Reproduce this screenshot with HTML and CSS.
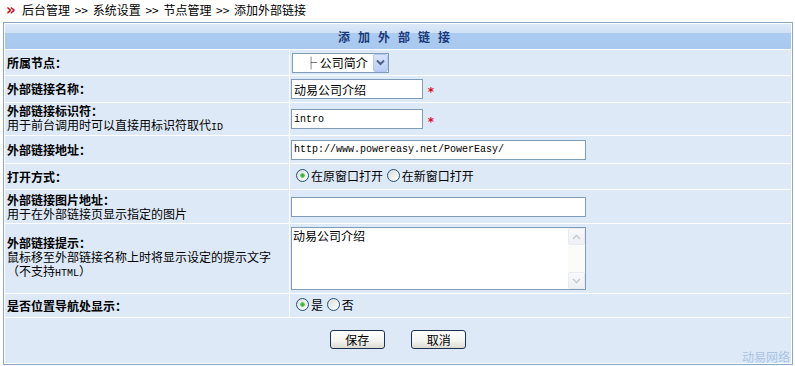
FILE: index.html
```html
<!DOCTYPE html>
<html lang="zh-CN">
<head>
    <meta charset="UTF-8">
    <title>添加外部链接</title>
    <link rel="stylesheet" href="styles.css">
</head>
<body>
    <div class="crumbs">
        <span class="crumb-arrow">&raquo;</span>
        <span class="crumb-text">后台管理 &gt;&gt; 系统设置 &gt;&gt; 节点管理 &gt;&gt; 添加外部链接</span>
    </div>

    <table class="form-table" cellspacing="1" cellpadding="0">
        <tr>
            <th colspan="2" class="title">添加外部链接</th>
        </tr>
        <tr class="row-node">
            <td class="label"><b>所属节点：</b></td>
            <td class="value">
                <span class="select-box">
                    <select class="node-select">
                        <option>├ 公司简介</option>
                    </select>
                    <span class="select-arrow">
                        <svg width="9" height="7" viewBox="0 0 9 7"><path d="M1 1.5 L4.5 5 L8 1.5" fill="none" stroke="#4d6185" stroke-width="2"/></svg>
                    </span>
                </span>
            </td>
        </tr>
        <tr class="row-name">
            <td class="label"><b>外部链接名称：</b></td>
            <td class="value"><input type="text" class="text short" value="动易公司介绍"> <span class="required">*</span></td>
        </tr>
        <tr class="row-ident">
            <td class="label"><b>外部链接标识符：</b><br>用于前台调用时可以直接用标识符取代<span class="mono">ID</span></td>
            <td class="value"><input type="text" class="text short mono" value="intro"> <span class="required">*</span></td>
        </tr>
        <tr class="row-url">
            <td class="label"><b>外部链接地址：</b></td>
            <td class="value"><input type="text" class="text long mono" value="http://www.powereasy.net/PowerEasy/"></td>
        </tr>
        <tr class="row-open">
            <td class="label"><b>打开方式：</b></td>
            <td class="value">
                <label class="choice"><input type="radio" name="open" checked>在原窗口打开</label>
                <label class="choice"><input type="radio" name="open">在新窗口打开</label>
            </td>
        </tr>
        <tr class="row-pic">
            <td class="label"><b>外部链接图片地址：</b><br>用于在外部链接页显示指定的图片</td>
            <td class="value"><input type="text" class="text long" value=""></td>
        </tr>
        <tr class="row-tip">
            <td class="label"><b>外部链接提示：</b><br>鼠标移至外部链接名称上时将显示设定的提示文字<br>（不支持<span class="mono">HTML</span>）</td>
            <td class="value">
                <div class="memo">
                    <textarea class="memo-text">动易公司介绍</textarea>
                    <div class="memo-scroll">
                        <span class="scroll-btn">
                            <svg width="9" height="6" viewBox="0 0 9 6"><path d="M1 5 L4.5 1.5 L8 5" fill="none" stroke="#c9ccd3" stroke-width="1.6"/></svg>
                        </span>
                        <span class="scroll-btn">
                            <svg width="9" height="6" viewBox="0 0 9 6"><path d="M1 1 L4.5 4.5 L8 1" fill="none" stroke="#c9ccd3" stroke-width="1.6"/></svg>
                        </span>
                    </div>
                </div>
            </td>
        </tr>
        <tr class="row-nav">
            <td class="label"><b>是否位置导航处显示：</b></td>
            <td class="value">
                <label class="choice"><input type="radio" name="nav" checked>是</label>
                <label class="choice"><input type="radio" name="nav">否</label>
            </td>
        </tr>
        <tr class="row-buttons">
            <td colspan="2" class="buttons">
                <button type="button" class="btn">保存</button>
                <button type="button" class="btn">取消</button>
            </td>
        </tr>
    </table>

    <div class="brand">动易网络</div>
</body>
</html>
```

FILE: styles.css
```css
body {
    margin: 0;
    padding: 0;
    background: #ffffff;
    font-family: "Noto Sans CJK SC", "DejaVu Sans", sans-serif;
    font-size: 12px;
    line-height: 14px;
    color: #000;
    position: relative;
    height: 366px;
    overflow: hidden;
}

/* breadcrumb */
.crumbs {
    height: 22px;
    display: flex;
    align-items: center;
    padding-left: 6px;
    box-sizing: border-box;
    padding-bottom: 2px;
}
.crumb-arrow {
    color: #c8101a;
    font-weight: bold;
    font-size: 15px;
    line-height: 14px;
    font-family: "DejaVu Sans", sans-serif;
    width: 16px;
}
.crumb-text {
    color: #000;
    white-space: pre;
    word-spacing: 2px;
}

/* form table */
.form-table {
    margin-left: 3px;
    width: 790px;
    border: 1px solid #8ea6c6;
    background: #ffffff;
    border-spacing: 1px;
}
.title {
    height: 25px;
    padding: 0;
    background: linear-gradient(#dce9f8 0, #cfe1f5 9px, #abcbf0 9px, #a8c8ee 100%);
    color: #193a7c;
    font-weight: bold;
    font-size: 12px;
    letter-spacing: 8px;
    text-align: center;
    vertical-align: middle;
}
.form-table td {
    background: #dde9f7;
    vertical-align: middle;
}
.label {
    width: 282px;
    padding: 0 0 0 2px;
}
.value {
    padding: 0 0 0 1px;
}
.row-node td { height: 25px; }
.row-name td { height: 26px; }
.row-ident td { height: 32px; }
.row-url td { height: 27px; }
.row-open td { height: 25px; }
.row-pic td { height: 33px; }
.row-tip td { height: 69px; }
.row-nav td { height: 23px; }
.row-buttons td { height: 45px; }

.mono {
    font-family: "Liberation Mono", "DejaVu Sans Mono", monospace;
    font-size: 10px;
}

/* inputs */
.text {
    height: 20px;
    box-sizing: border-box;
    border: 1px solid #7f9db9;
    background: #fff;
    padding: 0 2px;
    margin: 0;
    font-family: "Noto Sans CJK SC", "DejaVu Sans", sans-serif;
    font-size: 12px;
    color: #000;
    vertical-align: middle;
    outline: none;
}
.text.mono {
    font-family: "Liberation Mono", "DejaVu Sans Mono", monospace;
    font-size: 10px;
}
.short {
    width: 132px;
}
.long {
    width: 295px;
}
.required {
    color: #e0101a;
    font-weight: bold;
    font-family: "DejaVu Sans", sans-serif;
    font-size: 12px;
    margin-left: 2px;
    position: relative;
    top: 4px;
}

/* select */
.select-box {
    position: relative;
    display: inline-block;
    margin-left: 1px;
    width: 97px;
    height: 20px;
    vertical-align: middle;
}
.node-select {
    appearance: none;
    -webkit-appearance: none;
    width: 97px;
    height: 20px;
    box-sizing: border-box;
    border: 1px solid #7f9db9;
    background: #fff;
    padding: 0 0 0 12px;
    margin: 0;
    font-family: "Noto Sans CJK SC", "DejaVu Sans", sans-serif;
    font-size: 12px;
    color: #000;
    outline: none;
}
.select-arrow {
    position: absolute;
    right: 1px;
    top: 1px;
    width: 15px;
    height: 18px;
    box-sizing: border-box;
    border: 1px solid #b5c8f2;
    border-radius: 2px;
    background: linear-gradient(#d9e4fb, #b9cdf6);
    display: flex;
    align-items: center;
    justify-content: center;
}

/* radios */
.choice {
    display: inline-flex;
    align-items: center;
    margin-right: 1px;
}
.choice input {
    appearance: none;
    -webkit-appearance: none;
    width: 13px;
    height: 13px;
    margin: 0 2px 0 0;
    border: 1px solid #1d5281;
    border-radius: 50%;
    background: linear-gradient(135deg, #dcdcd6, #ffffff);
    box-sizing: border-box;
}
.choice input:checked {
    background: radial-gradient(circle, #2fa52f 0, #5fc75f 2px, rgba(255,255,255,0) 2.6px), linear-gradient(135deg, #dcdcd6, #ffffff);
}
.row-open .choice:first-child,
.row-nav .choice:first-child {
    margin-left: 5px;
}

/* textarea with scrollbar */
.memo {
    display: flex;
    width: 295px;
    height: 63px;
    box-sizing: border-box;
    border: 1px solid #7f9db9;
    background: #fff;
}
.memo-text {
    flex: 1;
    border: none;
    resize: none;
    padding: 1px 1px;
    margin: 0;
    font-family: "Noto Sans CJK SC", "DejaVu Sans", sans-serif;
    font-size: 12px;
    line-height: 14px;
    overflow: hidden;
    outline: none;
}
.memo-scroll {
    width: 17px;
    display: flex;
    flex-direction: column;
    justify-content: space-between;
    background: #fbfbf9;
}
.scroll-btn {
    height: 17px;
    box-sizing: border-box;
    border: 1px solid #e8ebef;
    border-radius: 2px;
    background: linear-gradient(#f9f9fb, #eef0f3);
    display: flex;
    align-items: center;
    justify-content: center;
}

/* buttons */
.buttons {
    text-align: center;
}
.btn {
    width: 55px;
    height: 19px;
    margin: 0 12px;
    padding: 0;
    border: 1px solid #1c3350;
    border-radius: 3px;
    background: linear-gradient(#ffffff, #f3f3ef 60%, #dcdad2);
    font-family: "Noto Sans CJK SC", "DejaVu Sans", sans-serif;
    font-size: 12px;
    line-height: 16px;
    color: #000;
    position: relative;
    top: -1px;
}

.brand {
    position: absolute;
    right: 5px;
    bottom: 2px;
    color: #a9c3e5;
    font-size: 12px;
    line-height: 14px;
}
```
